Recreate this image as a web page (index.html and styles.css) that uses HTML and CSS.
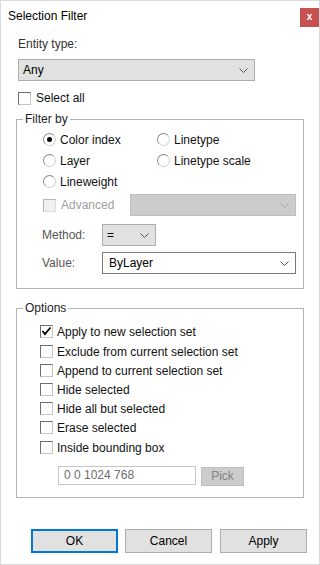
FILE: index.html
```html
<!DOCTYPE html>
<html lang="en">
<head>
  <meta charset="UTF-8" />
  <title>Selection Filter</title>
  <link rel="stylesheet" href="styles.css">
</head>
<body>

<div class="window">
  <div class="titlebar">
    <span class="title">Selection Filter</span>
    <span class="close">x</span>
  </div>

  <div class="content">
    <div class="label entity-label">Entity type:</div>
    <div class="combo entity-combo">
      <span>Any</span>
      <svg class="chev" width="9" height="5" viewBox="0 0 9 5"><polyline points="0.5,0.5 4.5,4.5 8.5,0.5" /></svg>
    </div>
    <div class="check-row select-all"><span class="box"></span>Select all</div>

    <fieldset class="group filter-group">
      <legend>Filter by</legend>
      <div class="group-body filter-body">
        <div class="radios">
          <div class="radio-row"><span class="radio checked"></span>Color index</div>
          <div class="radio-row"><span class="radio"></span>Linetype</div>
          <div class="radio-row"><span class="radio"></span>Layer</div>
          <div class="radio-row"><span class="radio"></span>Linetype scale</div>
          <div class="radio-row"><span class="radio"></span>Lineweight</div>
        </div>
        <div class="advanced-row">
          <div class="check-row disabled advanced"><span class="box"></span>Advanced</div>
          <div class="combo disabled-combo">
            <span></span>
            <svg class="chev" width="9" height="5" viewBox="0 0 9 5"><polyline points="0.5,0.5 4.5,4.5 8.5,0.5" /></svg>
          </div>
        </div>
        <div class="field-row method-row">
          <span class="field-label">Method:</span>
          <div class="combo method-combo">
            <span>=</span>
            <svg class="chev" width="9" height="5" viewBox="0 0 9 5"><polyline points="0.5,0.5 4.5,4.5 8.5,0.5" /></svg>
          </div>
        </div>
        <div class="field-row value-row">
          <span class="field-label">Value:</span>
          <div class="combo value-combo">
            <span>ByLayer</span>
            <svg class="chev" width="9" height="5" viewBox="0 0 9 5"><polyline points="0.5,0.5 4.5,4.5 8.5,0.5" /></svg>
          </div>
        </div>
      </div>
    </fieldset>

    <fieldset class="group options-group">
      <legend>Options</legend>
      <div class="group-body options-body">
        <div class="check-row opt"><span class="box checked"><svg width="11" height="11" viewBox="0 0 11 11"><polyline points="1.5,5 4,8 9.5,1.5" /></svg></span>Apply to new selection set</div>
        <div class="check-row opt gap"><span class="box"></span>Exclude from current selection set</div>
        <div class="check-row opt"><span class="box"></span>Append to current selection set</div>
        <div class="check-row opt"><span class="box"></span>Hide selected</div>
        <div class="check-row opt"><span class="box"></span>Hide all but selected</div>
        <div class="check-row opt"><span class="box"></span>Erase selected</div>
        <div class="check-row opt gap"><span class="box"></span>Inside bounding box</div>
        <div class="bbox-row">
          <div class="text-input">0 0 1024 768</div>
          <div class="pick-btn">Pick</div>
        </div>
      </div>
    </fieldset>
  </div>

  <div class="buttons">
    <div class="btn default">OK</div>
    <div class="btn">Cancel</div>
    <div class="btn apply">Apply</div>
  </div>
</div>

</body>
</html>
```

FILE: styles.css
```css
* { box-sizing: border-box; }
body {
  margin: 0;
  font-family: 'Liberation Sans', Arial, sans-serif;
  font-size: 12px;
  color: #111;
  background: #fff;
}
.window {
  width: 320px;
  height: 565px;
  border: 1px solid #dadada;
  background: #fff;
}
.titlebar {
  display: flex;
  justify-content: space-between;
  align-items: flex-start;
  padding: 7px 0 0 7px;
  height: 26px;
}
.title { line-height: 16px; color: #000; }
.close {
  width: 19px;
  height: 19px;
  background: #c75050;
  color: #fff;
  font-weight: bold;
  font-size: 10px;
  line-height: 18px;
  text-align: center;
}
.content { padding: 0 15px; }
.label { line-height: 16px; color: #333; }
.entity-label { margin: 9px 0 0 2px; }

.combo {
  display: flex;
  align-items: center;
  justify-content: space-between;
  height: 22px;
  padding: 0 6px 0 4px;
  background: #e1e1e1;
  border: 1px solid #adadad;
  color: #000;
}
.chev { fill: none; stroke: #555; stroke-width: 1; }
.entity-combo { margin: 7px 0 0 2px; width: 237px; }

.check-row {
  display: flex;
  align-items: center;
  height: 16px;
  line-height: 16px;
}
.box {
  width: 13px;
  height: 13px;
  margin-right: 5px;
  border: 1px solid;
  border-color: #6f6f6f #c4c4c4 #c4c4c4 #6f6f6f;
  background: #fff;
  display: flex;
  align-items: center;
  justify-content: center;
}
.box svg { fill: none; stroke: #000; stroke-width: 1.8; }
.select-all { margin: 9px 0 0 2px; }

.group {
  margin: 0;
  padding: 0;
  width: 288px;
  border: 1px solid #b4b4b4;
}
.group legend {
  margin-left: 6px;
  padding: 0 2px;
  line-height: 16px;
  color: #222;
}
.filter-group { margin-top: 5px; }
.filter-body { padding: 2px 0 14px 26px; }
.radios {
  display: grid;
  grid-template-columns: 114px 1fr;
  grid-auto-rows: 21px;
}
.radio-row { display: flex; align-items: center; }
.radio {
  width: 13px;
  height: 13px;
  margin-right: 4px;
  border-radius: 50%;
  border: 1px solid;
  border-color: #8a8a8a #d0d0d0 #d0d0d0 #8a8a8a;
  background: #fff;
  display: flex;
  align-items: center;
  justify-content: center;
}
.radio.checked::after {
  content: "";
  width: 5px;
  height: 5px;
  border-radius: 50%;
  background: #000;
}
.advanced-row {
  display: flex;
  align-items: center;
  margin-top: 2px;
}
.advanced { width: 87px; color: #a0a0a0; }
.disabled .box { background: #f0f0f0; border-color: #b4b4b4 #dcdcdc #dcdcdc #b4b4b4; }
.disabled-combo {
  width: 166px;
  background: #cccccc;
  border-color: #bfbfbf;
}
.disabled-combo .chev { stroke: #a0a0a0; }
.field-row {
  display: flex;
  align-items: center;
  margin-left: -1px;
}
.method-row { margin-top: 8px; }
.value-row { margin-top: 6px; }
.field-label { width: 60px; color: #555; }
.method-combo { width: 54px; }
.value-combo { width: 194px; background: #fff; border-color: #7a7a7a; padding-left: 6px; }

.options-group { margin-top: 11px; }
.options-body { padding: 6px 0 11px 23px; }
.opt { height: 19px; }
.opt .box { margin-right: 4px; }
.opt.gap { margin-top: 1px; }
.bbox-row {
  display: flex;
  align-items: flex-start;
  margin: 9px 0 0 18px;
}
.text-input {
  width: 138px;
  height: 19px;
  line-height: 17px;
  padding-left: 5px;
  border: 1px solid #c6c6c6;
  color: #6d6d6d;
}
.pick-btn {
  width: 43px;
  height: 19px;
  margin: 1px 0 0 5px;
  line-height: 17px;
  text-align: center;
  background: #cccccc;
  border: 1px solid #bfbfbf;
  color: #838383;
}

.buttons {
  display: flex;
  justify-content: flex-end;
  gap: 8px;
  margin-top: 31px;
  padding-right: 12px;
}
.btn {
  width: 87px;
  height: 24px;
  line-height: 22px;
  text-align: center;
  background: #e1e1e1;
  border: 1px solid #adadad;
  color: #000;
}
.btn.default { border: 2px solid #0078d7; line-height: 20px; margin-right: -1px; }
```
